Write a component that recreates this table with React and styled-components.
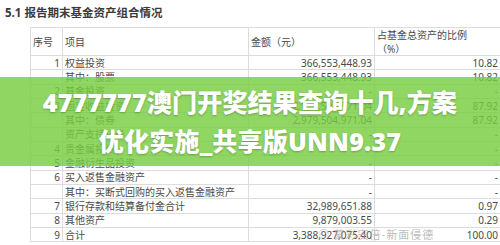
import React from "react";
import styled, { createGlobalStyle } from "styled-components";

const Global = createGlobalStyle`
  html, body { margin: 0; padding: 0; background: #fff; }
  body { width: 500px; height: 245px; overflow: hidden; font-family: "Noto Sans", "Noto Sans CJK SC", sans-serif; }
`;

const Page = styled.div`
  position: relative;
  width: 500px;
  height: 245px;
  overflow: hidden;
  background: #fff;
`;

const Title = styled.div`
  padding: 5px 0 0 5px;
  height: 22px;
  box-sizing: border-box;
  font-size: 11.5px;
  font-weight: 700;
  color: #3a3a3a;
  line-height: 16px;
`;

const Table = styled.div`
  margin: 5px 0 0 30px;
  width: 470px;
  border-top: 1px solid #dcdcdc;
  border-left: 1px solid #dcdcdc;
  font-size: 10px;
  color: #4a4a4a;
`;

const Row = styled.div`
  display: grid;
  grid-template-columns: 32px 186px 126px 126px;
  height: ${(p) => (p.$head ? "28px" : "14.33px")};
  box-sizing: border-box;
  border-bottom: 1px solid #dcdcdc;
`;

const Cell = styled.div`
  border-right: 1px solid #dcdcdc;
  box-sizing: border-box;
  display: flex;
  align-items: center;
  justify-content: ${(p) => (p.$right ? "flex-end" : "flex-start")};
  padding: 0 2px;
  white-space: nowrap;
  overflow: hidden;
  line-height: 14px;
`;

const HeadCell = styled(Cell)`
  align-items: ${(p) => (p.$top ? "flex-start" : "center")};
  white-space: normal;
  padding-top: ${(p) => (p.$top ? "0" : "0")};
  line-height: 14px;
`;

const Band = styled.div`
  position: absolute;
  left: 0;
  top: 77px;
  width: 500px;
  height: 89px;
  background: rgba(120, 205, 65, 0.82);
  display: flex;
  flex-direction: column;
  align-items: center;
  justify-content: center;
  color: #fff;
  font-family: "Noto Sans", "Noto Sans CJK SC", sans-serif;
  font-weight: 900;
  font-size: 25px;
  line-height: 39px;
  text-shadow: 0 1px 2px rgba(0, 0, 0, 0.25);
  letter-spacing: 0.2px;
`;

const Watermark = styled.div`
  position: absolute;
  left: 318px;
  top: 226px;
  font-size: 11px;
  color: rgba(170, 170, 170, 0.8);
  font-family: "Noto Sans CJK SC", sans-serif;
  letter-spacing: 1px;
`;

const rows = [
  ["1", "权益投资", "366,553,448.93", "10.82"],
  ["", "其中：股票", "366,553,448.93", "10.82"],
  ["2", "基金投资", "-", "-"],
  ["3", "固定收益投资", "2,979,504,971.04", "87.92"],
  ["", "其中：债券", "2,979,504,971.04", "87.92"],
  ["", "资产支持证券", "-", "-"],
  ["4", "贵金属投资", "-", "-"],
  ["5", "金融衍生品投资", "-", "-"],
  ["6", "买入返售金融资产", "-", "-"],
  ["", "其中：买断式回购的买入返售金融资产", "-", "-"],
  ["7", "银行存款和结算备付金合计", "32,989,651.88", "0.97"],
  ["8", "其他资产", "9,879,003.55", "0.29"],
  ["9", "合计", "3,388,927,075.40", "100.00"],
];

export default function App() {
  return (
    <Page>
      <Global />
      <Title>5.1 报告期末基金资产组合情况</Title>
      <Table>
        <Row $head>
          <HeadCell>序号</HeadCell>
          <HeadCell>项目</HeadCell>
          <HeadCell>金额（元）</HeadCell>
          <HeadCell $top>
            占基金总资产的比例
            <br />
            （%）
          </HeadCell>
        </Row>
        {rows.map((r, i) => (
          <Row key={i}>
            <Cell $right>{r[0]}</Cell>
            <Cell>{r[1]}</Cell>
            <Cell $right>{r[2]}</Cell>
            <Cell $right>{r[3]}</Cell>
          </Row>
        ))}
      </Table>
      <Band>
        <div>4777777澳门开奖结果查询十几,方案</div>
        <div>优化实施_共享版UNN9.37</div>
      </Band>
      <Watermark>◎ 蒙彩安倍-新面侵德</Watermark>
    </Page>
  );
}
